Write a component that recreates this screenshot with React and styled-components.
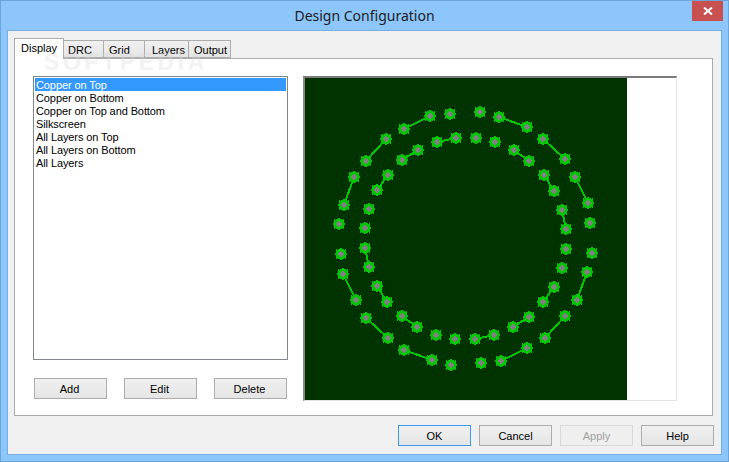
import React from "react";
import styled, { createGlobalStyle } from "styled-components";

const Global = createGlobalStyle`
  html, body { margin: 0; padding: 0; background: #8cc6fb; }
  * { box-sizing: border-box; }
`;

const Window = styled.div`
  position: relative;
  width: 729px;
  height: 462px;
  display: flex;
  flex-direction: column;
  padding: 0 6px 6px;
  background: #8cc6fb;
  border: 1px solid #6da5d8;
  font-family: "Liberation Sans", Arial, sans-serif;
  font-size: 11px;
  color: #000;
  overflow: hidden;
`;

const TitleBar = styled.div`
  position: relative;
  height: 29px;
  flex: none;
  display: flex;
  align-items: center;
  justify-content: center;
`;

const Title = styled.div`
  font-family: "Noto Sans", sans-serif;
  font-size: 14px;
  line-height: 29px;
  color: #1c1c1c;
`;

const CloseButton = styled.div`
  position: absolute;
  top: 0;
  right: -1px;
  width: 31px;
  height: 20px;
  background: #c75050;
  display: flex;
  align-items: center;
  justify-content: center;
`;

const Client = styled.div`
  flex: 1;
  display: flex;
  flex-direction: column;
  background: #f0f0f0;
  border: 1px solid #78aedf;
  padding: 7px 7px 8px 6px;
`;

const TabStrip = styled.div`
  display: flex;
  align-items: flex-end;
  height: 20px;
  flex: none;
  position: relative;
  z-index: 1;
`;

const Tab = styled.div`
  width: ${(p) => p.$w}px;
  height: ${(p) => (p.$active ? 21 : 18)}px;
  margin-bottom: ${(p) => (p.$active ? -1 : 0)}px;
  margin-left: ${(p) => (p.$active ? 0 : -1)}px;
  background: ${(p) => (p.$active ? "#fff" : "linear-gradient(#f0f0f0, #e5e5e5)")};
  border: 1px solid #acacac;
  border-bottom: ${(p) => (p.$active ? "none" : "1px solid #acacac")};
  display: flex;
  justify-content: flex-start;
  align-items: center;
  padding-left: ${(p) => p.$pad}px;
  padding-top: ${(p) => (p.$active ? 0 : 1)}px;
  padding-bottom: ${(p) => (p.$active ? 3 : 0)}px;
  white-space: nowrap;
  position: relative;
  z-index: ${(p) => (p.$active ? 2 : 0)};
`;

const Panel = styled.div`
  height: 358px;
  margin-right: 1px;
  flex: none;
  background: #fff;
  border: 1px solid #acacac;
  padding: 17px 0 0 18px;
  display: flex;
  gap: 15px;
`;

const LeftColumn = styled.div`
  width: 255px;
  display: flex;
  flex-direction: column;
  gap: 18px;
`;

const ListBox = styled.div`
  height: 284px;
  border: 1px solid #828790;
  padding: 1px;
  background: #fff;
`;

const ListItem = styled.div`
  height: 13px;
  line-height: 15px;
  padding-left: 1px;
  letter-spacing: -0.1px;
  white-space: nowrap;
  background: ${(p) => (p.$selected ? "#3399ff" : "transparent")};
  color: ${(p) => (p.$selected ? "#fff" : "#000")};
`;

const Button = styled.div`
  width: 73px;
  height: 21px;
  display: flex;
  align-items: center;
  justify-content: center;
  background: ${(p) => (p.$disabled ? "#efefef" : "linear-gradient(#f0f0f0, #e5e5e5)")};
  border: 1px solid ${(p) => (p.$primary ? "#3c9bf0" : p.$disabled ? "#d9d9d9" : "#acacac")};
  color: ${(p) => (p.$disabled ? "#a0a0a0" : "#000")};
`;

const ListActions = styled.div`
  display: flex;
  gap: 17px;
  padding-left: 1px;

  ${Button} {
    padding-right: 2px;
  }
`;

const Canvas = styled.div`
  width: 374px;
  height: 325px;
  background: #fff;
  border-top: 2px solid #7a7a7a;
  border-left: 2px solid #8a8a8a;
  border-right: 1px solid #e3e3e3;
  border-bottom: 1px solid #e3e3e3;
`;

const BoardSvg = styled.svg`
  display: block;
  width: 322px;
  height: 322px;
  background: #003300;
`;

const Footer = styled.div`
  margin-top: 9px;
  display: flex;
  justify-content: flex-end;
  gap: 8px;
`;

const Watermark = styled.div`
  position: absolute;
  left: 43px;
  top: 48px;
  font-family: "Liberation Sans", sans-serif;
  font-weight: bold;
  font-size: 23px;
  letter-spacing: 3.6px;
  line-height: 26px;
  color: rgba(255, 255, 255, 0.3);
  text-shadow: 0 0 1px rgba(0, 0, 0, 0.07);
  pointer-events: none;
  z-index: 3;
`;

const traces = [
  [430,116,404,129],[456,138,437,142],[386,139,366,161],[418,150,402,160],[388,175,377,190],[354,177,344,205],
  [499,117,527,127],[514,150,529,161],[543,139,565,159],[544,175,554,191],[575,177,588,203],
  [365,248,369,267],[343,274,356,300],[377,286,387,302],[366,318,388,338],[402,316,417,327],[404,350,432,360],
  [562,210,566,229],[587,272,577,300],[554,287,543,302],[529,317,513,327],[565,316,545,338],[475,339,494,335],[527,348,501,361],
];

const loose = [
  [450,114],[480,112],[476,138],[495,142],[369,209],[562,268],[339,224],[365,228],[341,254],
  [436,335],[455,339],[451,365],[590,223],[566,249],[592,253],[481,363],
];

const pads = [...traces.flatMap(([a, b, c, d]) => [[a, b], [c, d]]), ...loose];

const padShape =
  "M-1 -6H1V-5H3V-4H5V-1H6V1H5V4H3V5H1V6H-1V5H-3V4H-5V1H-6V-1H-5V-4H-3V-5H-1Z" +
  "M4 -5h1v1h-1zM-5 -5h1v1h-1zM4 4h1v1h-1zM-5 4h1v1h-1z";
const holeShape = "M-1 -3H1V-2H2V-1H3V1H2V2H1V3H-1V2H-2V1H-3V-1H-2V-2H-1Z";

const Board = () => (
  <BoardSvg viewBox="305 78 322 322" shapeRendering="crispEdges">
    {traces.map(([a, b, c, d], i) => (
      <line key={i} x1={a} y1={b} x2={c} y2={d} stroke="#00c800" strokeWidth="2" />
    ))}
    {pads.map(([x, y], i) => (
      <g key={i} transform={`translate(${x} ${y})`}>
        <path d={padShape} fill="#00c800" />
        <path d={holeShape} fill="#808080" />
      </g>
    ))}
  </BoardSvg>
);

const tabs = [
  ["Display", 50, 6, true],
  ["DRC", 41, 4],
  ["Grid", 42, 5],
  ["Layers", 45, 7],
  ["Output", 43, 5],
];

const items = [
  "Copper on Top",
  "Copper on Bottom",
  "Copper on Top and Bottom",
  "Silkscreen",
  "All Layers on Top",
  "All Layers on Bottom",
  "All Layers",
];

export default function App() {
  return (
    <Window>
      <Global />
      <TitleBar>
        <Title>Design Configuration</Title>
        <CloseButton>
          <svg width="10" height="8" viewBox="0 0 10 8">
            <path d="M1 0.5L9 7.5M9 0.5L1 7.5" stroke="#fff" strokeWidth="2" fill="none" />
          </svg>
        </CloseButton>
      </TitleBar>
      <Client>
        <TabStrip>
          {tabs.map(([label, w, pad, active]) => (
            <Tab key={label} $w={w} $pad={pad} $active={active}>{label}</Tab>
          ))}
        </TabStrip>
        <Panel>
          <LeftColumn>
            <ListBox>
              {items.map((t, i) => (
                <ListItem key={t} $selected={i === 0}>{t}</ListItem>
              ))}
            </ListBox>
            <ListActions>
              <Button>Add</Button>
              <Button>Edit</Button>
              <Button>Delete</Button>
            </ListActions>
          </LeftColumn>
          <Canvas>
            <Board />
          </Canvas>
        </Panel>
        <Footer>
          <Button $primary>OK</Button>
          <Button>Cancel</Button>
          <Button $disabled>Apply</Button>
          <Button>Help</Button>
        </Footer>
      </Client>
      <Watermark>SOFTPEDIA</Watermark>
    </Window>
  );
}
